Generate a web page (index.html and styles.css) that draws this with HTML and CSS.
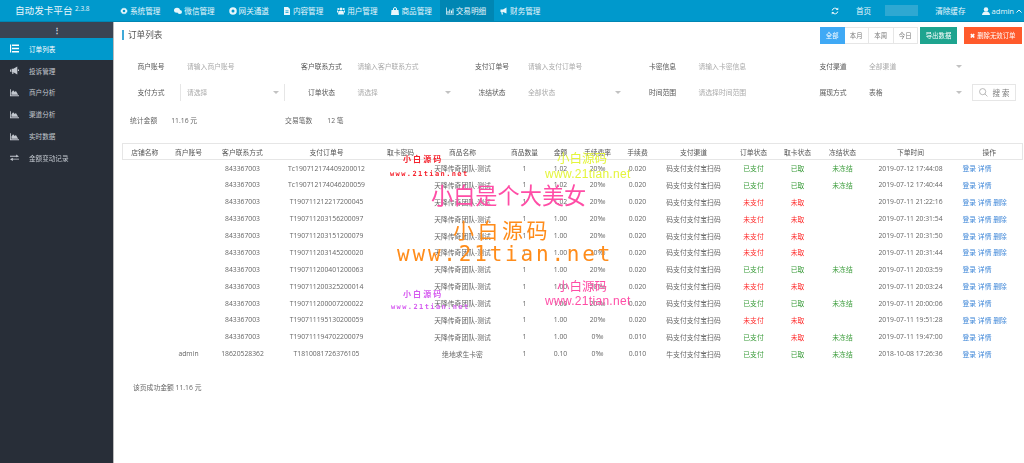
FILE: index.html

```html
<!DOCTYPE html>
<html lang="zh-CN">
<head>
  <meta charset="UTF-8" />
  <title>自动发卡平台</title>
  <link rel="stylesheet" href="styles.css">
</head>
<body>
  <header class="topbar">
    <div class="logo">自动发卡平台 <sup>2.3.8</sup></div>
    <nav class="nav">
      <a><svg viewBox="0 0 16 16"><path d="M8 1l1.500 2 2.500-.6.8 2.400 2.200 1.200-1 2 1 2-2.200 1.200-.8 2.400-2.500-.6L8 15l-1.500-2-2.500.6-.8-2.400L1 10l1-2-1-2 2.200-1.200.8-2.400 2.500.6z"/><circle class="hole" cx="8" cy="8" r="2.600"/></svg>系统管理</a>
      <a><svg viewBox="0 0 16 16"><ellipse cx="6" cy="6.500" rx="6" ry="5"/><ellipse cx="11.500" cy="10" rx="4.500" ry="3.800"/></svg>微信管理</a>
      <a><svg viewBox="0 0 16 16"><circle cx="8" cy="8" r="7.500"/><circle class="hole" cx="8" cy="8" r="3"/></svg>网关通道</a>
      <a><svg viewBox="0 0 16 16"><path d="M2 0h8l4 4v12H2z"/><path class="hole" d="M5 7h6v1.500H5zM5 10.500h6V12H5z"/></svg>内容管理</a>
      <a><svg viewBox="0 0 16 16"><circle cx="8" cy="4" r="3"/><circle cx="2.500" cy="4" r="2"/><circle cx="13.500" cy="4" r="2"/><path d="M3 8h10l1 7H2zM0 7h2v4H0zM14 7h2v4h-2z"/></svg>用户管理</a>
      <a><svg viewBox="0 0 16 16"><path d="M1 6h14l1 10H0z"/><path class="line" d="M5 7V4a3 3 0 0 1 6 0v3"/></svg>商品管理</a>
      <a class="on"><svg viewBox="0 0 16 16"><path d="M0 1h1.500v12.500H16V15H0zM3 8h2v4.500H3zM6.500 5h2v7.500h-2zM10 7h2v5.500h-2zM13 3h2v9.500h-2z"/></svg>交易明细</a>
      <a><svg viewBox="0 0 16 16"><path d="M1 5h5l7-4v12L6 10H5l1 5H3.500L2.500 10H1z"/></svg>财务管理</a>
    </nav>
    <div class="tools">
      <svg class="refresh" viewBox="0 0 16 16"><path class="line" d="M2.500 7a5.600 5.600 0 0 1 10-2.500M13.500 9a5.600 5.600 0 0 1-10 2.500"/><path d="M14.500 1v5h-5zM1.500 15v-5h5z"/></svg>
      <a class="home">首页</a>
      <span class="blurbox"></span>
      <a class="clear">清除缓存</a>
      <a class="user"><svg viewBox="0 0 16 16"><circle cx="8" cy="5" r="4.500"/><path d="M0 16c0-4 3-6 5-6.500h6c2 .5 5 2.500 5 6.500z"/></svg>admin<svg class="chev" viewBox="0 0 12 8"><path class="line" d="M1 7l5-5 5 5"/></svg></a>
    </div>
  </header>

  <div class="wrap">
    <aside class="side">
      <div class="side-toggle">⋮</div>
      <a class="on"><svg viewBox="0 0 16 16"><path d="M0 1h2v14H0zM3.500 1H16v2.500H3.500zM3.500 6.700H16v2.500H3.500zM3.500 12.500H16V15H3.500z"/></svg>订单列表</a>
      <a><svg viewBox="0 0 16 16"><path d="M0 6h2v4H0zM3 5h3l7-4v14L6 11v3H4v-3H3z"/><path d="M14 6h2v3h-2z"/></svg>投诉管理</a>
      <a><svg viewBox="0 0 16 16"><path d="M0 2h1.500v11H16v1.500H0zM2.500 12V8l3-4 3 3 2-1.500L14.500 12z"/></svg>商户分析</a>
      <a><svg viewBox="0 0 16 16"><path d="M0 2h1.500v11H16v1.500H0zM2.500 12V8l3-4 3 3 2-1.500L14.500 12z"/></svg>渠道分析</a>
      <a><svg viewBox="0 0 16 16"><path d="M0 2h1.500v11H16v1.500H0zM2.500 12V8l3-4 3 3 2-1.500L14.500 12z"/></svg>实时数据</a>
      <a><svg viewBox="0 0 16 16"><path d="M0 5h11V2.500L16 6l-5 1.500V6.500H0zM16 10H5V8.500L0 11l5 3v-2.500h11z"/></svg>金额变动记录</a>
    </aside>

    <main class="main">
      <div class="title-row">
        <h2 class="title">订单列表</h2>
        <div class="actions">
          <div class="range">
            <a class="on">全部</a><a>本月</a><a>本周</a><a>今日</a>
          </div>
          <a class="btn btn-teal">导出数据</a>
          <a class="btn btn-red"><b>✖</b> 删除无效订单</a>
        </div>
      </div>

      <form class="filters">
        <label>商户账号</label><div class="field">请输入商户账号</div>
        <label>客户联系方式</label><div class="field">请输入客户联系方式</div>
        <label>支付订单号</label><div class="field">请输入支付订单号</div>
        <label>卡密信息</label><div class="field">请输入卡密信息</div>
        <label>支付渠道</label><div class="field select">全部渠道</div>
        <span></span>
        <label>支付方式</label><div class="field select boxed">请选择</div>
        <label>订单状态</label><div class="field select">请选择</div>
        <label>冻结状态</label><div class="field select">全部状态</div>
        <label>时间范围</label><div class="field">请选择时间范围</div>
        <label>展现方式</label><div class="field select dark">表格</div>
        <a class="search"><svg viewBox="0 0 16 16"><circle class="line" cx="6.500" cy="6.500" r="5.500"/><path class="line" d="M10.500 10.500L15 15"/></svg>搜 索</a>
      </form>

      <div class="stats">
        <span class="s1">统计金额</span><span class="s2">11.16 元</span>
        <span class="s3">交易笔数</span><span class="s4">12 笔</span>
      </div>

      <table class="orders">
        <colgroup>
          <col class="c44"><col class="c44"><col class="c64"><col class="c104"><col class="c44"><col class="c80"><col class="c44"><col class="c28"><col class="c46"><col class="c34"><col class="c78"><col class="c42"><col class="c46"><col class="c44"><col class="c92"><col class="c66">
        </colgroup>
        <thead>
          <tr><th>店铺名称</th><th>商户账号</th><th>客户联系方式</th><th>支付订单号</th><th>取卡密码</th><th>商品名称</th><th>商品数量</th><th>金额</th><th>手续费率</th><th>手续费</th><th>支付渠道</th><th>订单状态</th><th>取卡状态</th><th>冻结状态</th><th>下单时间</th><th>操作</th></tr>
        </thead>
        <tbody>
          <tr><td></td><td></td><td>843367003</td><td>Tc190712174409200012</td><td></td><td>天降传奇团队-测试</td><td>1</td><td>1.02</td><td>20‰</td><td>0.020</td><td>码支付支付宝扫码</td><td class="ok">已支付</td><td class="ok">已取</td><td class="ok">未冻结</td><td>2019-07-12 17:44:08</td><td class="ops"><a>登录</a> <a>详情</a></td></tr>
          <tr><td></td><td></td><td>843367003</td><td>Tc190712174046200059</td><td></td><td>天降传奇团队-测试</td><td>1</td><td>1.02</td><td>20‰</td><td>0.020</td><td>码支付支付宝扫码</td><td class="ok">已支付</td><td class="ok">已取</td><td class="ok">未冻结</td><td>2019-07-12 17:40:44</td><td class="ops"><a>登录</a> <a>详情</a></td></tr>
          <tr><td></td><td></td><td>843367003</td><td>T190711212217200045</td><td></td><td>天降传奇团队-测试</td><td>1</td><td>1.02</td><td>20‰</td><td>0.020</td><td>码支付支付宝扫码</td><td class="no">未支付</td><td class="no">未取</td><td></td><td>2019-07-11 21:22:16</td><td class="ops"><a>登录</a> <a>详情</a> <a>删除</a></td></tr>
          <tr><td></td><td></td><td>843367003</td><td>T190711203156200097</td><td></td><td>天降传奇团队-测试</td><td>1</td><td>1.00</td><td>20‰</td><td>0.020</td><td>码支付支付宝扫码</td><td class="no">未支付</td><td class="no">未取</td><td></td><td>2019-07-11 20:31:54</td><td class="ops"><a>登录</a> <a>详情</a> <a>删除</a></td></tr>
          <tr><td></td><td></td><td>843367003</td><td>T190711203151200079</td><td></td><td>天降传奇团队-测试</td><td>1</td><td>1.00</td><td>20‰</td><td>0.020</td><td>码支付支付宝扫码</td><td class="no">未支付</td><td class="no">未取</td><td></td><td>2019-07-11 20:31:50</td><td class="ops"><a>登录</a> <a>详情</a> <a>删除</a></td></tr>
          <tr><td></td><td></td><td>843367003</td><td>T190711203145200020</td><td></td><td>天降传奇团队-测试</td><td>1</td><td>1.00</td><td>20‰</td><td>0.020</td><td>码支付支付宝扫码</td><td class="no">未支付</td><td class="no">未取</td><td></td><td>2019-07-11 20:31:44</td><td class="ops"><a>登录</a> <a>详情</a> <a>删除</a></td></tr>
          <tr><td></td><td></td><td>843367003</td><td>T190711200401200063</td><td></td><td>天降传奇团队-测试</td><td>1</td><td>1.00</td><td>20‰</td><td>0.020</td><td>码支付支付宝扫码</td><td class="ok">已支付</td><td class="ok">已取</td><td class="ok">未冻结</td><td>2019-07-11 20:03:59</td><td class="ops"><a>登录</a> <a>详情</a></td></tr>
          <tr><td></td><td></td><td>843367003</td><td>T190711200325200014</td><td></td><td>天降传奇团队-测试</td><td>1</td><td>1.00</td><td>20‰</td><td>0.020</td><td>码支付支付宝扫码</td><td class="no">未支付</td><td class="no">未取</td><td></td><td>2019-07-11 20:03:24</td><td class="ops"><a>登录</a> <a>详情</a> <a>删除</a></td></tr>
          <tr><td></td><td></td><td>843367003</td><td>T190711200007200022</td><td></td><td>天降传奇团队-测试</td><td>1</td><td>1.00</td><td>20‰</td><td>0.020</td><td>码支付支付宝扫码</td><td class="ok">已支付</td><td class="ok">已取</td><td class="ok">未冻结</td><td>2019-07-11 20:00:06</td><td class="ops"><a>登录</a> <a>详情</a></td></tr>
          <tr><td></td><td></td><td>843367003</td><td>T190711195130200059</td><td></td><td>天降传奇团队-测试</td><td>1</td><td>1.00</td><td>20‰</td><td>0.020</td><td>码支付支付宝扫码</td><td class="no">未支付</td><td class="no">未取</td><td></td><td>2019-07-11 19:51:28</td><td class="ops"><a>登录</a> <a>详情</a> <a>删除</a></td></tr>
          <tr><td></td><td></td><td>843367003</td><td>T190711194702200079</td><td></td><td>天降传奇团队-测试</td><td>1</td><td>1.00</td><td>0‰</td><td>0.010</td><td>码支付支付宝扫码</td><td class="ok">已支付</td><td class="no">未取</td><td class="ok">未冻结</td><td>2019-07-11 19:47:00</td><td class="ops"><a>登录</a> <a>详情</a></td></tr>
          <tr><td></td><td>admin</td><td>18620528362</td><td>T1810081726376105</td><td></td><td>绝地求生卡密</td><td>1</td><td>0.10</td><td>0‰</td><td>0.010</td><td>牛支付支付宝扫码</td><td class="ok">已支付</td><td class="ok">已取</td><td class="ok">未冻结</td><td>2018-10-08 17:26:36</td><td class="ops"><a>登录</a> <a>详情</a></td></tr>
        </tbody>
      </table>

      <p class="page-sum">该页成功金额 11.16 元</p>
    </main>
  </div>

  <!-- watermarks over the table -->
  <div class="mark red-small m1">小 白 源 码</div>
  <div class="mark red-url m2">www.21tian.net</div>
  <div class="mark yellow m3">小白源码</div>
  <div class="mark yellow-url m4">www.21tian.net</div>
  <div class="mark pink-big m5">小白是个大美女</div>
  <div class="mark orange m6">小白源码</div>
  <div class="mark orange-url m7">www.21tian.net</div>
  <div class="mark purple m8">小 白 源 码</div>
  <div class="mark purple-url m9">www.21tian.net</div>
  <div class="mark pink m10">小白源码</div>
  <div class="mark pink-url m11">www.21tian.net</div>
</body>
</html>
```

FILE: styles.css

```css
* {
  box-sizing: border-box;
}
html, body {
  height: 100%;
}
body {
  margin: 0;
  position: relative;
  overflow: hidden;
  background: #fff;
  color: #666;
  font-family: "Open Sans", "Noto Sans CJK SC", sans-serif;
  font-size: 6.8px;
  /* the source picture is a soft, scaled down capture */
  filter: blur(.35px);
}
svg {
  fill: currentColor;
  flex: none;
}
svg .hole {
  fill: #0099cc;
}
svg .line {
  fill: none;
  stroke: currentColor;
  stroke-width: 2;
}

/* top bar */
.topbar {
  height: 22px;
  display: flex;
  align-items: center;
  background: #0099cc;
  border-bottom: 1px solid #0086b3;
  color: #e8f6fb;
}
.logo {
  width: 114px;
  padding-left: 15px;
  font-size: 9.6px;
  line-height: 22px;
  white-space: nowrap;
}
.logo sup {
  font-size: 6.4px;
  line-height: 0;
  vertical-align: 3px;
}
.nav {
  display: flex;
  height: 21px;
}
.nav a {
  width: 54.3px;
  display: flex;
  align-items: center;
  gap: 2px;
  padding-left: 6px;
  font-size: 7.6px;
  white-space: nowrap;
}
.nav a.on {
  background: #0086b3;
}
.nav a.on svg .hole {
  fill: #0086b3;
}
.nav svg {
  width: 8px;
  height: 8px;
}
.tools {
  margin-left: auto;
  height: 21px;
  display: flex;
  align-items: center;
  font-size: 7.6px;
  padding-right: 2px;
}
.refresh {
  width: 8px;
  height: 8px;
}
.home {
  margin-left: 17px;
}
.blurbox {
  width: 33px;
  height: 11px;
  margin-left: 14px;
  background: #2ea8d2;
}
.clear {
  margin-left: 17px;
}
.user {
  margin-left: 16px;
  display: flex;
  align-items: center;
  gap: 2px;
}
.user svg {
  width: 8px;
  height: 8px;
}
.user svg.chev {
  width: 6px;
  height: 4px;
}

.wrap {
  display: flex;
  height: 441px;
}

/* side menu */
.side {
  width: 113px;
  flex: none;
  background: #282e38;
  color: #c3c8cf;
  font-size: 6.6px;
}
.side-toggle {
  height: 16px;
  background: #3a4453;
  color: #d8dce2;
  text-align: center;
  font-size: 8px;
  line-height: 16px;
  font-weight: 700;
}
.side a {
  height: 21.8px;
  display: flex;
  align-items: center;
  gap: 10px;
  padding-left: 10px;
  white-space: nowrap;
}
.side a.on {
  background: #0099cc;
  color: #fff;
}
.side svg {
  width: 9px;
  height: 9px;
}

/* content */
.main {
  flex: 1;
  min-width: 0;
  border-left: 1px solid #bbb;
  padding-left: 8px;
}
.title-row {
  display: flex;
  align-items: flex-start;
  justify-content: space-between;
  padding: 5px 2px 0 0;
}
.title {
  margin: 3px 0 0;
  height: 10px;
  padding-left: 4px;
  border-left: 2px solid #3fa9d8;
  color: #555;
  font-size: 8.6px;
  font-weight: 400;
  line-height: 10px;
}
.actions {
  display: flex;
  align-items: flex-start;
  font-size: 6.4px;
}
.range {
  display: flex;
  height: 17px;
  margin-right: 2px;
}
.range a {
  width: 24.5px;
  border: 1px solid #e6e6e6;
  border-left: 0;
  text-align: center;
  line-height: 15px;
  color: #777;
}
.range a.on {
  background: #3fa9f5;
  border: 0;
  color: #fff;
  line-height: 17px;
}
.btn {
  height: 17px;
  line-height: 17px;
  text-align: center;
  color: #fff;
}
.btn-teal {
  width: 37px;
  background: #1ea48f;
  margin-right: 7px;
}
.btn-red {
  width: 58px;
  background: #ff5a2b;
}

.filters {
  display: grid;
  grid-template-columns: repeat(5, 58px 112.5px) 46px;
  grid-auto-rows: 26px;
  align-items: center;
  margin: 9px 0 0 0;
}
.filters label {
  text-align: center;
  color: #555;
  white-space: nowrap;
}
.field {
  position: relative;
  width: 105px;
  height: 17px;
  padding-left: 7px;
  line-height: 17px;
  color: #aaa;
  white-space: nowrap;
}
.field.dark {
  color: #666;
}
.field.boxed {
  border-left: 1px solid #e6e6e6;
  border-right: 1px solid #e6e6e6;
  padding-left: 6px;
}
.select::after {
  content: "";
  position: absolute;
  right: 5px;
  top: 7px;
  border: 3px solid transparent;
  border-top-color: #c2c2c2;
}
.search {
  width: 44px;
  height: 17px;
  margin-left: -3px;
  display: flex;
  align-items: center;
  gap: 5px;
  padding-left: 6px;
  border: 1px solid #e6e6e6;
  color: #777;
  font-size: 7.5px;
  white-space: nowrap;
}
.search svg {
  width: 9px;
  height: 9px;
  color: #999;
}
.search svg .line {
  stroke-width: 1.2;
}

.stats {
  display: flex;
  height: 14px;
  margin-top: 9px;
  line-height: 14px;
  color: #666;
}
.s1 { margin-left: 8px; }
.s2 { margin-left: 14px; }
.s3 { margin-left: 88px; }
.s4 { margin-left: 15px; }

.orders {
  table-layout: fixed;
  border-collapse: collapse;
  width: 900px;
  margin-top: 15px;
  white-space: nowrap;
  text-align: center;
}
.orders th {
  height: 16px;
  padding: 0;
  font-weight: 400;
  color: #555;
  border-top: 1px solid #e6e6e6;
  border-bottom: 1px solid #e6e6e6;
}
.orders th:first-child {
  border-left: 1px solid #e6e6e6;
}
.orders th:last-child {
  border-right: 1px solid #e6e6e6;
}
.orders td {
  height: 16.9px;
  padding: 0;
  color: #666;
}
.orders td.ok {
  color: #3a9c3a;
}
.orders td.no {
  color: #ff2a2a;
}
.orders td.ops {
  text-align: left;
  padding-left: 6px;
}
.orders td.ops a {
  color: #3d86d8;
}
.c28 { width: 28px; }
.c34 { width: 34px; }
.c42 { width: 42px; }
.c44 { width: 44px; }
.c46 { width: 46px; }
.c64 { width: 64px; }
.c66 { width: 66px; }
.c78 { width: 78px; }
.c80 { width: 80px; }
.c92 { width: 92px; }
.c104 { width: 104px; }

.page-sum {
  margin: 20px 0 0 11px;
  color: #666;
}

/* watermarks, they sit on top of the table */
.mark {
  position: absolute;
  white-space: nowrap;
  line-height: 1;
  pointer-events: none;
}
.red-small, .purple {
  font-size: 8px;
  font-weight: 700;
}
.red-small, .red-url {
  color: #f5222d;
}
.purple, .purple-url {
  color: #d65cf0;
}
.red-url, .purple-url {
  font-family: "DejaVu Sans Mono", monospace;
  font-size: 7px;
  font-weight: 700;
  letter-spacing: 1.4px;
}
.yellow, .pink {
  font-size: 12.5px;
}
.yellow, .yellow-url {
  color: #e4f53c;
}
.pink, .pink-url, .pink-big {
  color: #ff4da6;
}
.yellow-url, .pink-url {
  font-family: "Liberation Sans", sans-serif;
  font-size: 12px;
  letter-spacing: .3px;
}
.pink-big {
  font-size: 22.2px;
}
.orange, .orange-url {
  color: #ff8c1a;
}
.orange {
  font-size: 21px;
  letter-spacing: 3.5px;
}
.orange-url {
  font-family: "DejaVu Sans Mono", monospace;
  font-size: 21px;
  letter-spacing: 2.8px;
}
.m1 { left: 403px; top: 155px; }
.m2 { left: 390px; top: 171px; }
.m3 { left: 557px; top: 153px; }
.m4 { left: 545px; top: 168px; }
.m5 { left: 431px; top: 185px; }
.m6 { left: 453px; top: 220px; }
.m7 { left: 397px; top: 244px; }
.m8 { left: 403px; top: 290px; }
.m9 { left: 391px; top: 304px; }
.m10 { left: 557px; top: 281px; }
.m11 { left: 545px; top: 295px; }
```
